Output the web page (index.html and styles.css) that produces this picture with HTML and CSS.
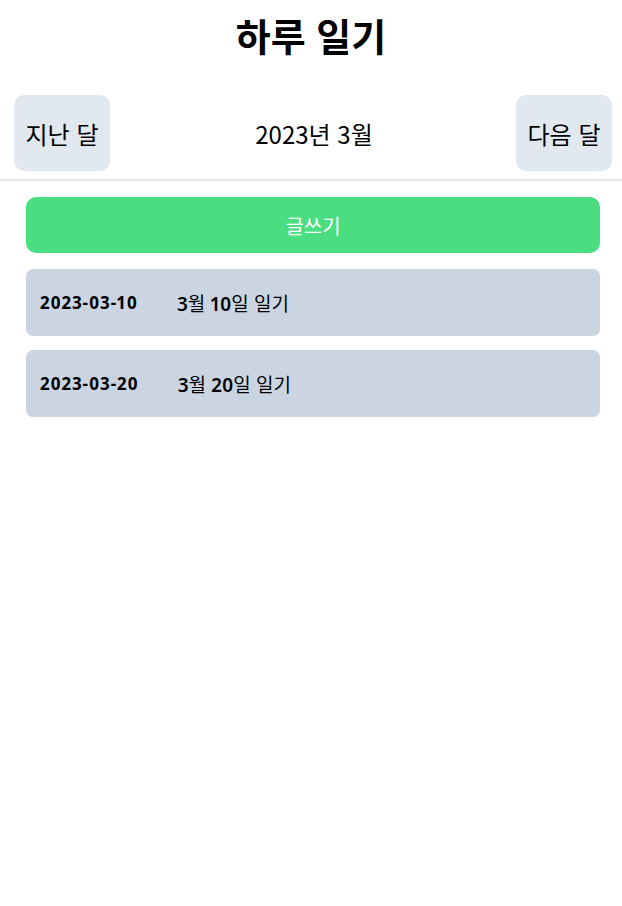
FILE: index.html
```html
<!DOCTYPE html>
<html lang="ko">
<head>
<meta charset="utf-8">
<title>하루 일기</title>
<link rel="stylesheet" href="styles.css">
</head>
<body>
<h1 class="title">하루 일기</h1>
<header class="month-bar">
  <button class="nav-btn">지난 달</button>
  <span class="month">2023년 3월</span>
  <button class="nav-btn">다음 달</button>
</header>
<main class="content">
  <button class="write-btn">글쓰기</button>
  <ul class="diary-list">
    <li class="diary-item">
      <span class="diary-date">2023-03-10</span>
      <span class="diary-title"><b class="num">3</b>월 <b class="num">10</b>일 일기</span>
    </li>
    <li class="diary-item">
      <span class="diary-date">2023-03-20</span>
      <span class="diary-title"><b class="num">3</b>월 <b class="num">20</b>일 일기</span>
    </li>
  </ul>
</main>
</body>
</html>
```

FILE: styles.css
```css
* { box-sizing: border-box; }
body {
  margin: 0;
  font-family: "Noto Sans", "Noto Sans CJK KR", sans-serif;
  color: #000;
  background: #fff;
}
.title {
  margin: 0;
  padding-top: 13px;
  text-align: center;
  font-family: "Noto Sans CJK KR", sans-serif;
  font-size: 38px;
  font-weight: 700;
  line-height: 44px;
}
.month-bar {
  margin-top: 38px;
  display: flex;
  align-items: center;
  justify-content: space-between;
  padding: 0 10px 8px 14px;
  border-bottom: 2px solid #e5e7eb;
}
.nav-btn {
  height: 76px;
  width: 96px;
  border: none;
  border-radius: 10px;
  background: #e2e8f0;
  font-family: "Noto Sans CJK KR", sans-serif;
  font-size: 24px;
  color: #000;
  padding: 0;
}
.month {
  font-family: "Noto Sans CJK KR", sans-serif;
  font-size: 24px;
  margin-left: 2px;
}
.content {
  padding: 16px 22px 0 26px;
  display: flex;
  flex-direction: column;
}
.write-btn {
  height: 56px;
  border: none;
  border-radius: 10px;
  background: #4ade80;
  color: #fff;
  font-family: "Noto Sans CJK KR", sans-serif;
  font-size: 20px;
  padding: 0;
}
.diary-list {
  list-style: none;
  margin: 16px 0 0;
  padding: 0;
  display: flex;
  flex-direction: column;
  gap: 14px;
}
.diary-item {
  height: 67px;
  background: #cbd5e1;
  border-radius: 7px;
  display: flex;
  align-items: center;
  padding-left: 14px;
  gap: 39px;
}
.diary-date {
  font-size: 17px;
  font-weight: 700;
  letter-spacing: 0.9px;
  font-variant-numeric: proportional-nums;
}
.diary-title {
  font-family: "Noto Sans CJK KR", sans-serif;
  font-size: 19px;
}
.num {
  font-family: "Noto Sans", sans-serif;
  font-weight: 600;
  font-variant-numeric: proportional-nums;
}
```
